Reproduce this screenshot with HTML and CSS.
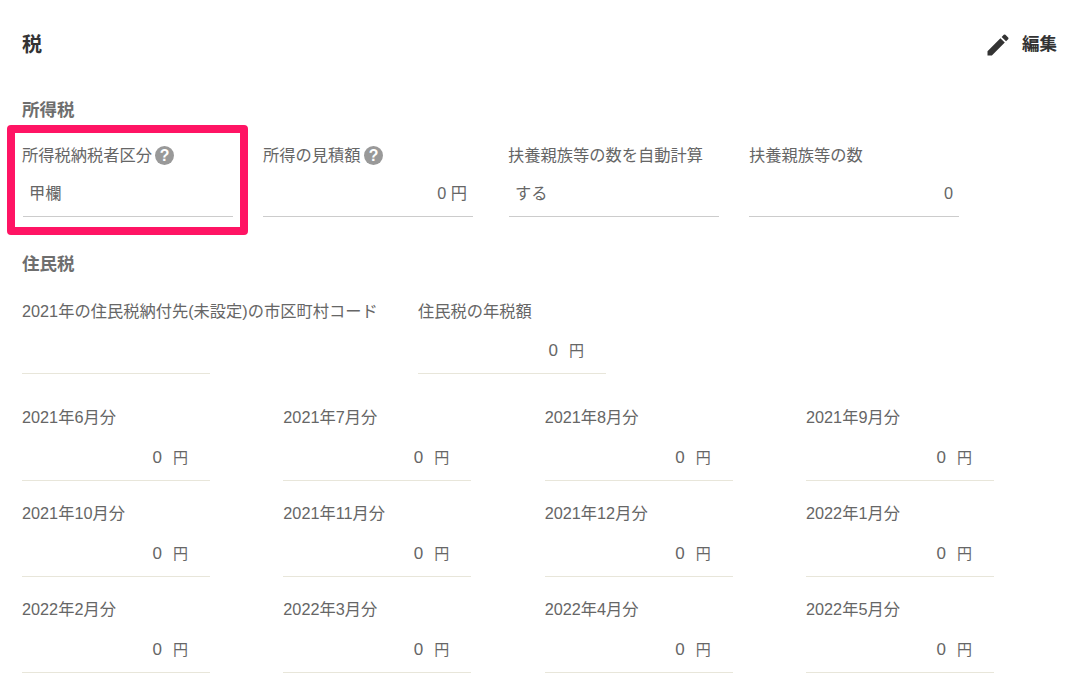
FILE: index.html
```html
<!DOCTYPE html>
<html lang="ja">
<head>
<meta charset="utf-8">
<title>税</title>
<link rel="stylesheet" href="styles.css">
</head>
<body>
<main class="page">
  <header class="head">
    <h1 class="title">税</h1>
    <button class="edit" type="button">
      <svg class="edit-icon" viewBox="0 0 24 24" aria-hidden="true"><path d="M3 17.25V21h3.75L17.81 9.94l-3.75-3.75L3 17.25zM20.71 7.04a1 1 0 0 0 0-1.41l-2.34-2.34a1 1 0 0 0-1.41 0l-1.83 1.83 3.75 3.75 1.83-1.83z"/></svg>
      <span class="edit-text">編集</span>
    </button>
  </header>

  <h2 class="section income-title">所得税</h2>
  <section class="income">
    <div class="highlight"></div>
    <div class="field inset">
      <div class="label">所得税納税者区分<svg class="help" viewBox="0 0 18 18" aria-hidden="true"><circle cx="9" cy="9" r="9"/><text x="9" y="14" text-anchor="middle">?</text></svg></div>
      <div class="value">甲欄</div>
    </div>
    <div class="field">
      <div class="label">所得の見積額<svg class="help" viewBox="0 0 18 18" aria-hidden="true"><circle cx="9" cy="9" r="9"/><text x="9" y="14" text-anchor="middle">?</text></svg></div>
      <div class="value right">0 円</div>
    </div>
    <div class="field shifted inset">
      <div class="label">扶養親族等の数を自動計算</div>
      <div class="value">する</div>
    </div>
    <div class="field">
      <div class="label">扶養親族等の数</div>
      <div class="value right count">0</div>
    </div>
  </section>

  <h2 class="section resident-title">住民税</h2>
  <section class="resident-top">
    <div class="cell code">
      <div class="cell-label">2021年の住民税納付先(未設定)の市区町村コード</div>
      <div class="cell-value"></div>
    </div>
    <div class="cell annual">
      <div class="cell-label">住民税の年税額</div>
      <div class="cell-value"><span class="num">0</span><span class="yen">円</span></div>
    </div>
  </section>

  <section class="months">
    <div class="cell"><div class="cell-label">2021年6月分</div><div class="cell-value"><span class="num">0</span><span class="yen">円</span></div></div>
    <div class="cell"><div class="cell-label">2021年7月分</div><div class="cell-value"><span class="num">0</span><span class="yen">円</span></div></div>
    <div class="cell"><div class="cell-label">2021年8月分</div><div class="cell-value"><span class="num">0</span><span class="yen">円</span></div></div>
    <div class="cell"><div class="cell-label">2021年9月分</div><div class="cell-value"><span class="num">0</span><span class="yen">円</span></div></div>
    <div class="cell"><div class="cell-label">2021年10月分</div><div class="cell-value"><span class="num">0</span><span class="yen">円</span></div></div>
    <div class="cell"><div class="cell-label">2021年11月分</div><div class="cell-value"><span class="num">0</span><span class="yen">円</span></div></div>
    <div class="cell"><div class="cell-label">2021年12月分</div><div class="cell-value"><span class="num">0</span><span class="yen">円</span></div></div>
    <div class="cell"><div class="cell-label">2022年1月分</div><div class="cell-value"><span class="num">0</span><span class="yen">円</span></div></div>
    <div class="cell"><div class="cell-label">2022年2月分</div><div class="cell-value"><span class="num">0</span><span class="yen">円</span></div></div>
    <div class="cell"><div class="cell-label">2022年3月分</div><div class="cell-value"><span class="num">0</span><span class="yen">円</span></div></div>
    <div class="cell"><div class="cell-label">2022年4月分</div><div class="cell-value"><span class="num">0</span><span class="yen">円</span></div></div>
    <div class="cell"><div class="cell-label">2022年5月分</div><div class="cell-value"><span class="num">0</span><span class="yen">円</span></div></div>
  </section>
</main>
</body>
</html>
```
FILE: styles.css
```css
* { box-sizing: border-box; }
html, body { margin: 0; padding: 0; background: #fff; }
body {
  font-family: "Liberation Sans", "Noto Sans CJK JP", sans-serif;
  font-size: 16.25px;
  color: #666;
  overflow: hidden;
}
.page { width: 1085px; height: 699px; padding: 31px 28px 0 22px; overflow: hidden; }

.head { display: flex; justify-content: space-between; align-items: center; height: 28px; }
.title { margin: 0; font-size: 20px; line-height: 28px; font-weight: 700; color: #333; }
.edit {
  display: flex; align-items: center; gap: 10px;
  border: 0; background: none; padding: 0; font: inherit;
  font-size: 17.5px; font-weight: 700; color: #333;
}
.edit-icon { width: 28px; height: 28px; fill: #333; }
.edit-text { line-height: 24px; margin-top: -3px; }

.section { margin: 0; font-size: 17.5px; line-height: 24px; font-weight: 700; color: #6e6e6e; }
.income-title { margin-top: 39px; }
.resident-title { margin-top: 35px; }

.income { position: relative; display: flex; margin-top: 21px; padding-left: 1px; gap: 30px; }
.highlight {
  position: absolute; left: -15px; top: -18px;
  width: 241px; height: 110px;
  border: 8px solid #ff1464; border-radius: 4px;
}
.field { width: 210px; flex: none; }
.field.shifted { margin-left: 6px; }
.label { display: flex; align-items: center; gap: 3px; height: 24px; line-height: 24px; white-space: nowrap; }
.inset .label { margin-left: -1px; }
.help { width: 19px; height: 19px; flex: none; fill: #999; }
.help text { fill: #fff; font-size: 15px; font-weight: 700; font-family: "Liberation Sans", sans-serif; }
.value {
  height: 46px; margin-top: 4px; padding: 0 6px 0 6px;
  line-height: 44px; color: #666;
  border-bottom: 1px solid #ccc;
}
.right { text-align: right; }
.count { padding-right: 6px; }

.resident-top { display: flex; margin-top: 23px; }
.resident-top .code { width: 396px; }
.resident-top .annual { width: 190px; }
.resident-top .cell { flex: none; }
.months {
  display: grid; grid-template-columns: repeat(4, 261.33px);
  grid-auto-rows: 96px; margin-top: 31px;
}
.cell-label { height: 24px; line-height: 24px; white-space: nowrap; color: #666; }
.cell-value {
  width: 188px; height: 51px; padding: 6px 22px 0 0;
  display: flex; justify-content: flex-end; align-items: center; gap: 11px;
  border-bottom: 1px solid #e8e6da;
}
.months .cell-value { height: 52px; padding-top: 17px; align-items: flex-start; }
.num { font-size: 17px; line-height: 24px; }
.yen { font-size: 15px; line-height: 24px; }
```
